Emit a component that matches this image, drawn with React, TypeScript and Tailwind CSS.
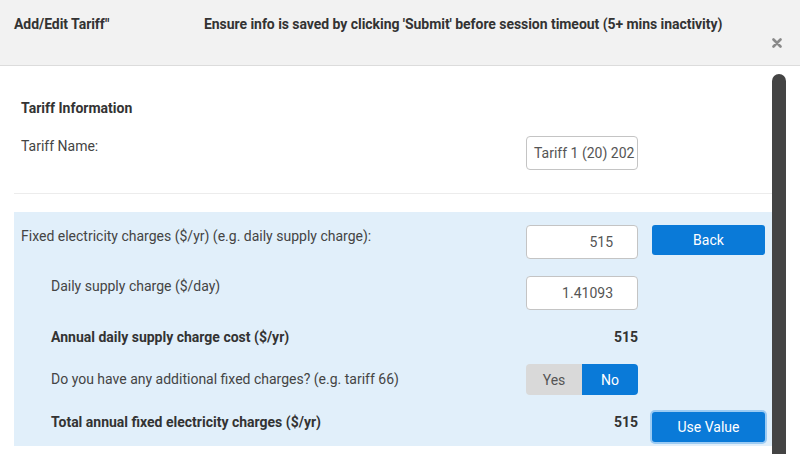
import React from "react";

const FONT = { fontFamily: "Roboto, 'Liberation Sans', Arial, sans-serif" };

function CloseIcon() {
  return (
    <svg width="10" height="10" viewBox="0 0 10 10" className="block">
      <path d="M1.5 1.5 L8.5 8.5 M8.5 1.5 L1.5 8.5" stroke="#8a8a8a" strokeWidth="2.6" strokeLinecap="round" />
    </svg>
  );
}

function NumberInput({ value }: { value: string }) {
  return (
    <div className="flex h-[34px] w-[112px] items-center justify-end rounded-[4px] border border-[#c4c4c4] bg-white pr-[24px] text-[14px] text-[#555]">
      {value}
    </div>
  );
}

function BlueButton({ label, focused }: { label: string; focused?: boolean }) {
  return (
    <div
      className={
        focused
          ? "flex h-[30px] w-[113px] items-center justify-center rounded-[3px] bg-[#0a7ad8] text-[14px] text-white ring-2 ring-[#9ccbf3]"
          : "flex h-[30px] w-[113px] items-center justify-center rounded-[3px] bg-[#0a7ad8] text-[14px] text-white"
      }
    >
      {label}
    </div>
  );
}

export default function App() {
  return (
    <div className="h-[454px] w-[800px] overflow-hidden bg-white text-[#444]" style={FONT}>
      {/* header */}
      <header className="h-[66px] border-b border-[#dcdcdc] bg-[#f2f2f2] pt-[14px]">
        <div className="flex text-[14px] font-bold leading-5 tracking-[-0.05px] text-[#333]">
          <div className="w-[204px] pl-[14px]">Add/Edit Tariff"</div>
          <div>Ensure info is saved by clicking 'Submit' before session timeout (5+ mins inactivity)</div>
        </div>
        <div className="mt-[4px] flex justify-end pr-[18px]">
          <CloseIcon />
        </div>
      </header>

      {/* body */}
      <div className="flex">
        <div className="flex-1 pl-[14px]">
          <div className="px-[7px] pt-[32px]">
            <div className="text-[14px] font-bold leading-5 text-[#333]">Tariff Information</div>
            <div className="mt-[18px] flex items-start gap-[14px]">
              <div className="flex-1 text-[14px] leading-5">Tariff Name:</div>
              <div className="flex h-[34px] w-[112px] items-center overflow-hidden whitespace-nowrap rounded-[4px] border border-[#c4c4c4] bg-white pl-[7px] text-[14px] text-[#555]">
                Tariff 1 (20) 202
              </div>
              <div className="w-[113px]" />
            </div>
          </div>
          <div className="mt-[23px] border-t border-[#ececec]" />

          <section className="mt-[18px] bg-[#e1effa] pb-[4px] pl-[7px] pr-[7px] pt-[13px] text-[14px] leading-5">
            <div className="flex items-start gap-[14px]">
              <div className="mt-[1px] flex-1">Fixed electricity charges ($/yr) (e.g. daily supply charge):</div>
              <NumberInput value="515" />
              <BlueButton label="Back" />
            </div>

            <div className="mt-[17px] flex items-start gap-[14px]">
              <div className="flex-1 pl-[30px]">Daily supply charge ($/day)</div>
              <NumberInput value="1.41093" />
              <div className="w-[113px]" />
            </div>

            <div className="mt-[17px] flex items-start gap-[14px]">
              <div className="flex-1 pl-[30px] font-bold text-[#333]">Annual daily supply charge cost ($/yr)</div>
              <div className="w-[112px] text-right font-bold text-[#333]">515</div>
              <div className="w-[113px]" />
            </div>

            <div className="mt-[17px] flex items-start gap-[14px]">
              <div className="mt-[5px] flex-1 pl-[30px]">Do you have any additional fixed charges? (e.g. tariff 66)</div>
              <div className="flex h-[31px] w-[112px] overflow-hidden rounded-[4px]">
                <div className="flex flex-1 items-center justify-center bg-[#d9d9d9] text-[#555]">Yes</div>
                <div className="flex flex-1 items-center justify-center bg-[#0a7ad8] text-white">No</div>
              </div>
              <div className="w-[113px]" />
            </div>

            <div className="mt-[16px] flex items-start gap-[14px]">
              <div className="mt-[1px] flex-1 pl-[30px] font-bold text-[#333]">Total annual fixed electricity charges ($/yr)</div>
              <div className="mt-[1px] w-[112px] text-right font-bold text-[#333]">515</div>
              <div className="pt-[1px]">
                <BlueButton label="Use Value" focused />
              </div>
            </div>
          </section>
        </div>

        {/* scrollbar */}
        <div className="w-[28px] pt-[8px] pr-[14px]">
          <div className="h-[400px] w-[14px] rounded-t-full bg-[#444]" />
        </div>
      </div>
    </div>
  );
}
